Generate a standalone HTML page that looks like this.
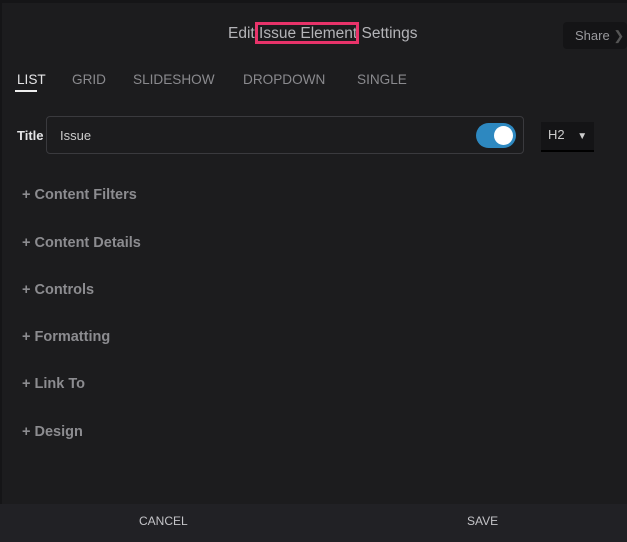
<!DOCTYPE html>
<html><head><meta charset="utf-8"><style>
body{margin:0;width:627px;height:542px;background:#151517;font-family:"Liberation Sans",sans-serif;overflow:hidden;position:relative}
.main{position:absolute;left:2px;top:3px;right:0;height:501px;background:#1c1c1e}
.t{position:absolute;white-space:nowrap}
.title{left:228px;top:25px;font-size:15.5px;color:#b4b4b8}
.hl{position:absolute;left:255px;top:22px;width:104px;height:22px;border:3px solid #e8336a;box-sizing:border-box}
.share{position:absolute;left:563px;top:22px;width:64px;height:27px;background:#141416;border-radius:4px;color:#9a9a9e;font-size:13px;line-height:27px;padding-left:12px;box-sizing:border-box}
.tab{top:72px;font-size:13.6px;color:#8a8a8e}
.field{position:absolute;left:46px;top:116px;width:478px;height:38px;border:1px solid #3a3a3e;border-radius:4px;box-sizing:border-box}
.tog{position:absolute;left:476px;top:123px;width:40px;height:25px;border-radius:13px;background:#2d88c0}
.tog:after{content:"";position:absolute;right:3px;top:3px;width:19px;height:19px;border-radius:50%;background:#fff}
.h2{position:absolute;left:541px;top:122px;width:53px;height:30px;background:#141416;border-bottom:2px solid #000;color:#ccc;font-size:13px;line-height:26px;padding-left:7px;box-sizing:border-box}
.sec{left:22px;font-size:14.5px;font-weight:bold;color:#8c8c90}
.foot{position:absolute;left:0;top:504px;width:627px;height:38px;background:#212125}
.fb{top:514px;font-size:12px;color:#c4c4c8}
</style></head><body>
<div class="main"></div>
<div class="t title">Edit Issue Element Settings</div>
<div class="hl"></div>
<div class="share">Share <span style="color:#555">&#10095;</span></div>
<div class="t tab" style="left:17px;color:#e4e4e6">LIST</div>
<div style="position:absolute;left:15px;top:90px;width:22px;height:2px;background:#eee"></div>
<div class="t tab" style="left:72px">GRID</div>
<div class="t tab" style="left:133px">SLIDESHOW</div>
<div class="t tab" style="left:243px">DROPDOWN</div>
<div class="t tab" style="left:357px">SINGLE</div>
<div class="t" style="left:17px;top:128px;font-size:13px;font-weight:bold;color:#e4e4e6">Title</div>
<div class="field"></div>
<div class="t" style="left:60px;top:128px;font-size:13px;color:#ccc">Issue</div>
<div class="tog"></div>
<div class="h2">H2 <span style="font-size:10px;margin-left:9px">&#9660;</span></div>
<div class="t sec" style="top:187px">+ Content Filters</div>
<div class="t sec" style="top:235px">+ Content Details</div>
<div class="t sec" style="top:282px">+ Controls</div>
<div class="t sec" style="top:329px">+ Formatting</div>
<div class="t sec" style="top:376px">+ Link To</div>
<div class="t sec" style="top:424px">+ Design</div>
<div class="foot"></div>
<div class="t fb" style="left:139px">CANCEL</div>
<div class="t fb" style="left:467px">SAVE</div>
</body></html>
